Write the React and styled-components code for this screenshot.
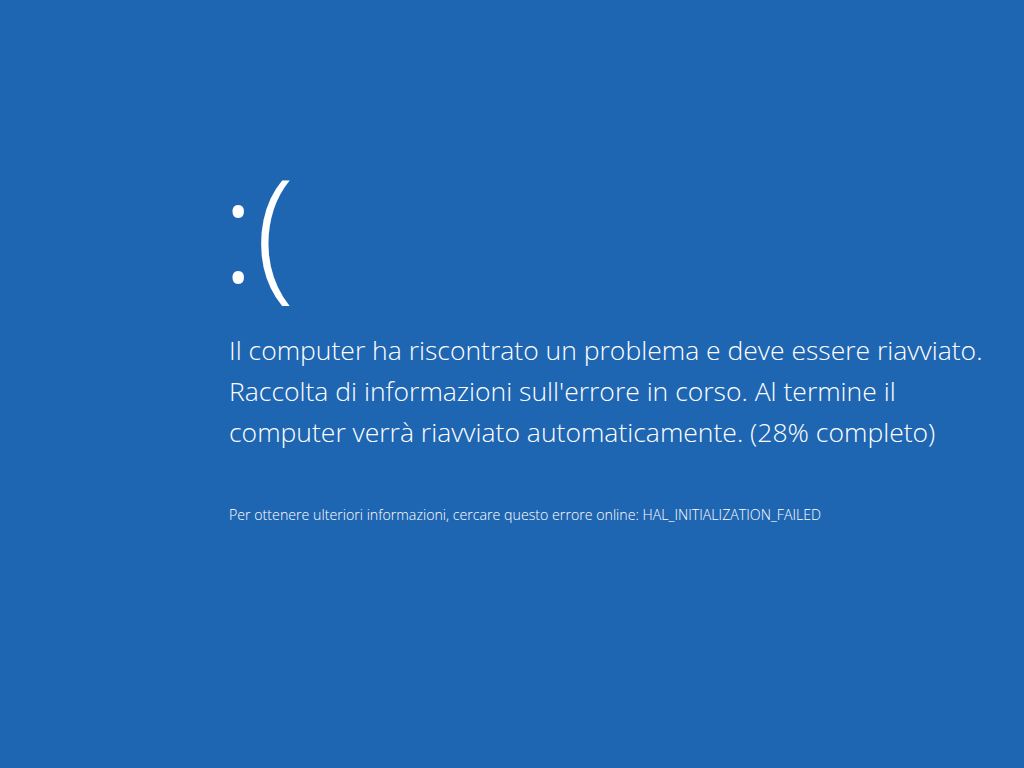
import styled, { createGlobalStyle } from "styled-components";

const GlobalStyle = createGlobalStyle`
    html, body {
        margin: 0;
        padding: 0;
        background: #1f66b2;
    }
`

const Schermo = styled.main`
    width: 1024px;
    height: 768px;
    background: #1f66b2;
    color: #fff;
    font-family: "Open Sans", "Noto Sans", sans-serif;
    box-sizing: border-box;
    padding: 137px 0 0 221px;
    display: flex;
    flex-direction: column;
    overflow: hidden;
`

const Faccina = styled.div`
    font-size: 144px;
    font-weight: 300;
    line-height: 180px;
    height: 193px;
`

const Messaggio = styled.p`
    margin: 0 0 0 8px;
    font-size: 26.5px;
    font-weight: 300;
    line-height: 41px;
`

const Dettagli = styled.p`
    margin: 52px 0 0 8px;
    font-size: 14.2px;
    font-weight: 300;
`

export default function App() {
    return (
        <Schermo>
            <GlobalStyle />
            <Faccina>:(</Faccina>
            <Messaggio>
                Il computer ha riscontrato un problema e deve essere riavviato.<br />
                Raccolta di informazioni sull'errore in corso. Al termine il<br />
                computer verrà riavviato automaticamente. (28% completo)
            </Messaggio>
            <Dettagli>
                Per ottenere ulteriori informazioni, cercare questo errore online: HAL_INITIALIZATION_FAILED
            </Dettagli>
        </Schermo>
    )
}
